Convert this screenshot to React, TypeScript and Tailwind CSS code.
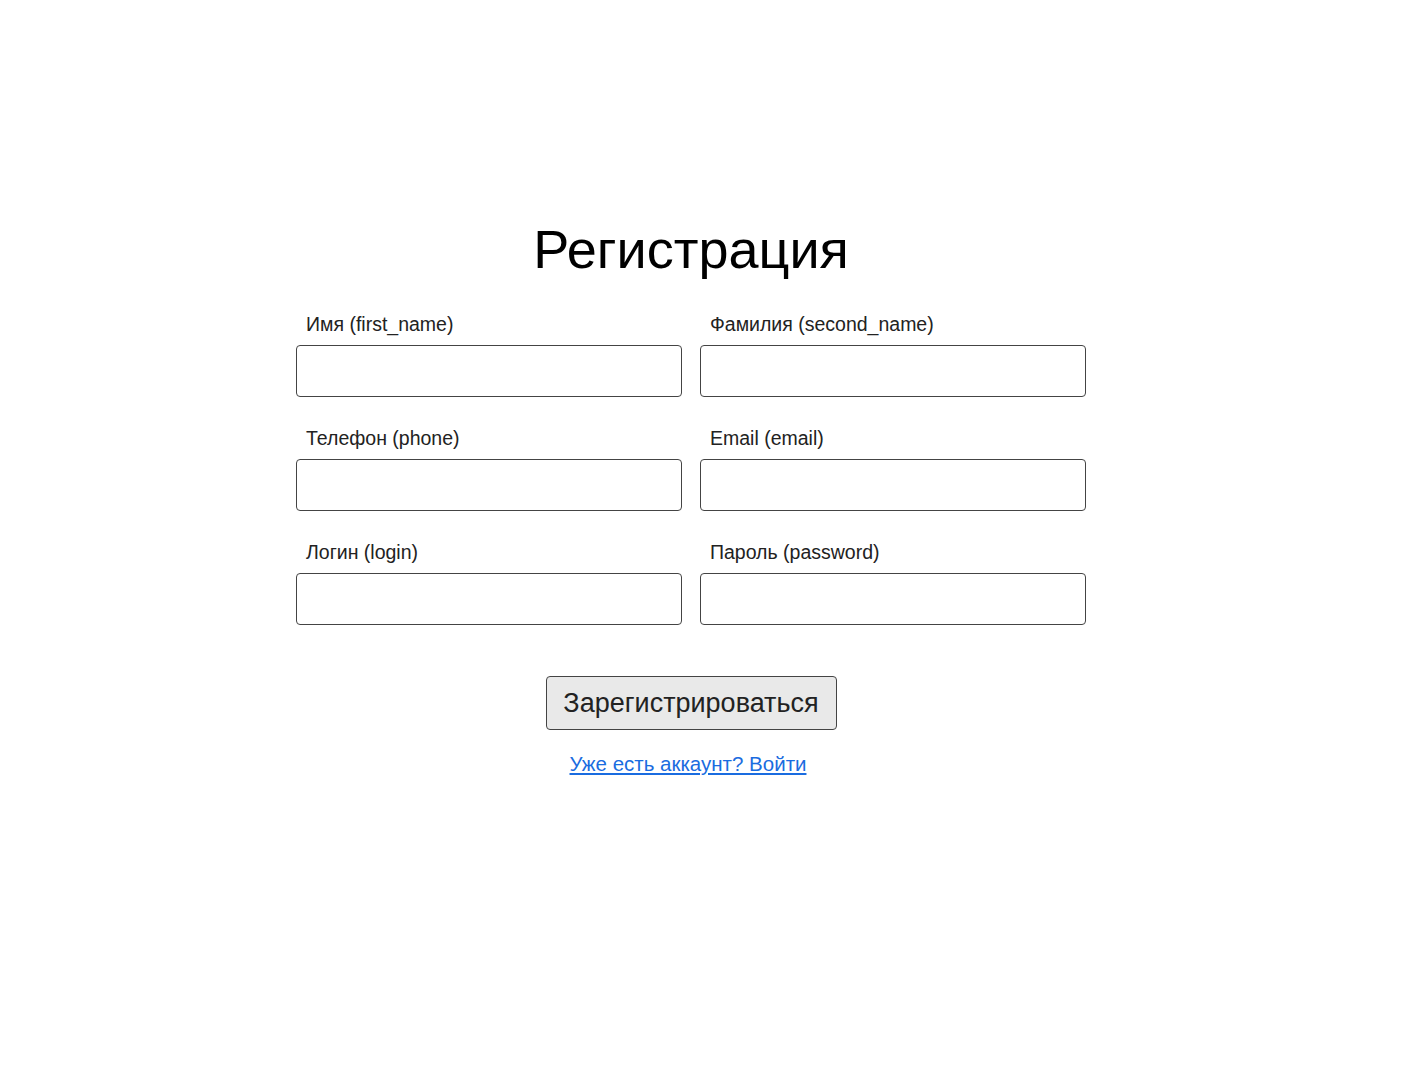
import React from "react";

const fields: [string, string][] = [
  ["Имя (first_name)", "first_name"],
  ["Фамилия (second_name)", "second_name"],
  ["Телефон (phone)", "phone"],
  ["Email (email)", "email"],
  ["Логин (login)", "login"],
  ["Пароль (password)", "password"],
];

export default function App() {
  return (
    <div
      className="min-h-[1090px] w-full bg-white pr-[40px] flex justify-center"
      style={{ fontFamily: '"Liberation Sans", Arial, sans-serif' }}
    >
      <div className="w-[790px] pt-[220px] flex flex-col items-center">
        <h1 className="text-[54px] leading-[58px] text-black font-normal">Регистрация</h1>
        <div className="mt-[35px] w-full grid grid-cols-2 gap-x-[18px] gap-y-[30px]">
          {fields.map(([label, name]) => (
            <div key={name} className="flex flex-col">
              <label className="pl-[10px] text-[19.5px] leading-[22px] text-[#222]">{label}</label>
              <input
                type={name === "password" ? "password" : "text"}
                name={name}
                className="mt-[10px] h-[52px] w-full rounded-[4px] border border-[#444] bg-white"
              />
            </div>
          ))}
        </div>
        <button className="mt-[51px] h-[54px] w-[291px] rounded-[4px] border border-[#444] bg-[#e9e9e9] text-[27px] text-[#222]">
          Зарегистрироваться
        </button>
        <a href="#" className="mt-[22px] mr-[6px] text-[20.5px] leading-[23px] text-[#1a6ce0] underline">
          Уже есть аккаунт? Войти
        </a>
      </div>
    </div>
  );
}
